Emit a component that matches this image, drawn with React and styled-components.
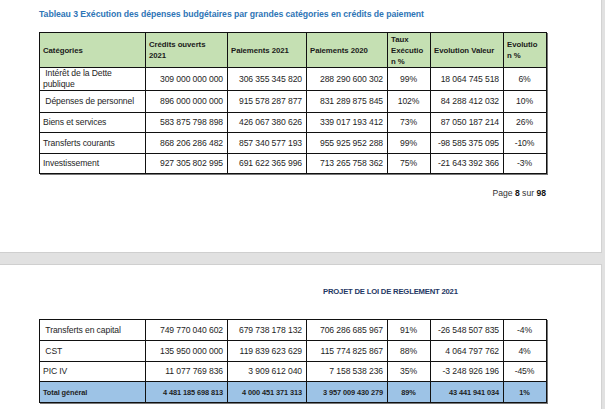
import React from 'react';
import styled, { createGlobalStyle } from 'styled-components';

const GlobalStyle = createGlobalStyle`
  html, body {
    margin: 0;
    padding: 0;
    background: #e1e1e1;
  }
  body {
    font-family: 'Liberation Sans', Arial, sans-serif;
    color: #222;
  }
`;

const widths = [106, 82, 79, 81, 43, 73, 43];

const firstRows = [
  [' Intérêt de la Dette publique', '309 000 000 000', '306 355 345 820', '288 290 600 302', '99%', '18 064 745 518', '6%'],
  [' Dépenses de personnel', '896 000 000 000', '915 578 287 877', '831 289 875 845', '102%', '84 288 412 032', '10%'],
  ['Biens et services', '583 875 798 898', '426 067 380 626', '339 017 193 412', '73%', '87 050 187 214', '26%'],
  ['Transferts courants', '868 206 286 482', '857 340 577 193', '955 925 952 288', '99%', '-98 585 375 095', '-10%'],
  ['Investissement', '927 305 802 995', '691 622 365 996', '713 265 758 362', '75%', '-21 643 392 366', '-3%'],
];

const secondRows = [
  [' Transferts en capital', '749 770 040 602', '679 738 178 132', '706 286 685 967', '91%', '-26 548 507 835', '-4%'],
  [' CST', '135 950 000 000', '119 839 623 629', '115 774 825 867', '88%', '4 064 797 762', '4%'],
  ['PIC IV', '11 077 769 836', '3 909 612 040', '7 158 538 236', '35%', '-3 248 926 196', '-45%'],
];

const total = ['Total général', '4 481 185 698 813', '4 000 451 371 313', '3 957 009 430 279', '89%', '43 441 941 034', '1%'];

const Viewer = styled.div`
  display: flex;
  flex-direction: column;
  gap: 11px;
  padding-right: 3px;
  width: 605px;
  box-sizing: border-box;
`;

const Page = styled.section`
  background: #fff;
  height: ${(p) => p.h}px;
  padding: ${(p) => p.pad};
  box-sizing: border-box;
  border-bottom: ${(p) => (p.last ? 'none' : '1px solid #cfcfcf')};
  border-top: ${(p) => (p.last ? '1px solid #cfcfcf' : 'none')};
  border-right: 1px solid #d2d2d2;
`;

const Title = styled.h3`
  margin: 0 0 13px;
  font-size: 8.7px;
  font-weight: bold;
  color: #2e75b6;
  line-height: 10px;
  letter-spacing: -0.05px;
`;

const RunningHead = styled.div`
  margin: 0 0 ${(p) => p.after}px 284px;
  font-size: 7.7px;
  font-weight: bold;
  color: #1f3864;
  line-height: 10px;
  letter-spacing: -0.2px;
`;

const Table = styled.table`
  border-collapse: collapse;
  table-layout: fixed;
  width: 507px;
  font-size: 8.6px;
  letter-spacing: -0.1px;
  line-height: 11px;
  box-shadow: 1px 1px 0 #777;
  border: 1px solid #111;
  border-top: ${(p) => (p.open ? 'none' : '1px solid #111')};
`;

const Head = styled.th`
  background: #c5e0b3;
  border: 1px solid #111;
  font-weight: bold;
  font-size: 7.8px;
  letter-spacing: -0.05px;
  text-align: left;
  vertical-align: middle;
  padding: 0 3px;
  height: 34px;
  color: #1a1a1a;
`;

const Cell = styled.td`
  border: 1px solid #111;
  padding: 0 4px 0 3px;
  height: ${(p) => p.h || 20}px;
  text-align: ${(p) => p.align};
  vertical-align: middle;
  white-space: ${(p) => (p.first ? 'pre-wrap' : 'nowrap')};
  background: ${(p) => (p.total ? '#9dc3e6' : 'transparent')};
  font-weight: ${(p) => (p.total ? 'bold' : 'normal')};
  font-size: ${(p) => (p.total ? '7.4px' : 'inherit')};
  color: #1e1e1e;
`;

const Footer = styled.p`
  margin: 14px 0 0;
  width: 507px;
  text-align: right;
  font-size: 8.6px;
  color: #333;
  b {
    color: #111;
  }
`;

const alignFor = (i) => (i === 0 ? 'left' : i === 4 || i === 6 ? 'center' : 'right');

const Row = ({ cells, h, isTotal }) => (
  <tr>
    {cells.map((c, i) => (
      <Cell key={i} first={i === 0} align={alignFor(i)} h={h} total={isTotal}>
        {c}
      </Cell>
    ))}
  </tr>
);

const Cols = () => (
  <colgroup>
    {widths.map((w, i) => (
      <col key={i} style={{ width: w }} />
    ))}
  </colgroup>
);

const App = () => {
  const heights = [22, 21, 19, 20, 19];
  return (
    <>
      <GlobalStyle />
      <Viewer>
        <Page h={253} pad="9px 0 0 39px">
          <Title>Tableau 3 Exécution des dépenses budgétaires par grandes catégories en crédits de paiement</Title>
          <Table>
            <Cols />
            <thead>
              <tr>
                <Head>Catégories</Head>
                <Head>Crédits ouverts 2021</Head>
                <Head>Paiements 2021</Head>
                <Head>Paiements 2020</Head>
                <Head>Taux Exécutio n %</Head>
                <Head>Evolution Valeur</Head>
                <Head>Evolutio n %</Head>
              </tr>
            </thead>
            <tbody>
              {firstRows.map((r, i) => (
                <Row key={i} cells={r} h={heights[i]} />
              ))}
            </tbody>
          </Table>
          <Footer>
            Page <b>8</b> sur <b>98</b>
          </Footer>
        </Page>
        <Page h={145} last pad="22px 0 0 39px">
          <RunningHead after={22}>PROJET DE LOI DE REGLEMENT 2021</RunningHead>
          <Table open>
            <Cols />
            <tbody>
              {secondRows.map((r, i) => (
                <Row key={i} cells={r} h={i === 2 ? 19 : 20} />
              ))}
              <Row cells={total} h={20} isTotal />
            </tbody>
          </Table>
        </Page>
      </Viewer>
    </>
  );
};

export default App;
